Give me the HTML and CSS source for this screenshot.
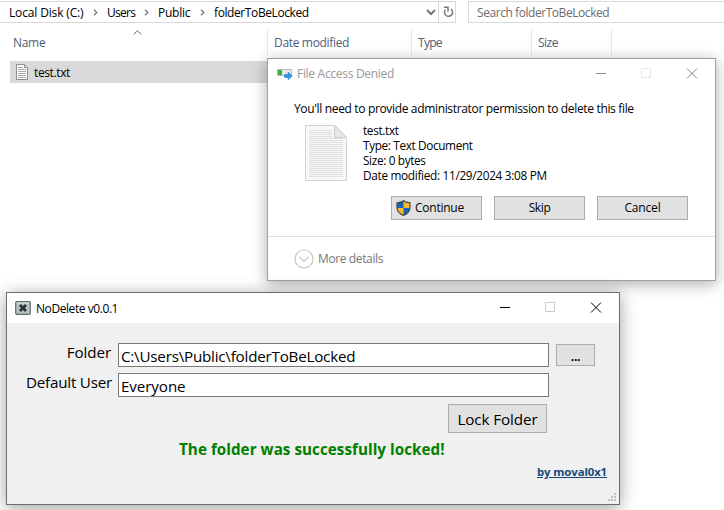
FILE: index.html
```html
<!DOCTYPE html>
<html lang="en">
<head>
<meta charset="utf-8">
<title>NoDelete</title>
<link rel="stylesheet" href="styles.css">
</head>
<body>
<main class="desktop">
  <section class="explorer">
    <div class="toolbar">
      <div class="address">
        <span class="crumb c1">Local Disk (C:)</span>
        <svg class="sep" width="5" height="7" viewBox="0 0 5 7"><path d="M1 .7 3.8 3.5 1 6.3"/></svg>
        <span class="crumb c2">Users</span>
        <svg class="sep" width="5" height="7" viewBox="0 0 5 7"><path d="M1 .7 3.8 3.5 1 6.3"/></svg>
        <span class="crumb c3">Public</span>
        <svg class="sep" width="5" height="7" viewBox="0 0 5 7"><path d="M1 .7 3.8 3.5 1 6.3"/></svg>
        <span class="crumb c4">folderToBeLocked</span>
        <svg class="drop" width="10" height="7" viewBox="0 0 10 7"><path d="M1 1 5 5 9 1"/></svg>
        <span class="refresh"><svg width="11" height="12" viewBox="0 0 11 12"><path d="M1 1.300H5V5.500M2.300 3.700A4.100 4.100 0 1 0 8 3"/></svg></span>
      </div>
      <div class="search"><span class="t-search">Search folderToBeLocked</span></div>
    </div>
    <div class="columns">
      <div class="col name"><span class="h-name">Name</span><svg class="sort" width="9" height="5" viewBox="0 0 9 5"><path d="M.7 4.3 4.5 .8 8.3 4.3"/></svg></div>
      <div class="col date"><span class="h-date">Date modified</span></div>
      <div class="col type"><span class="h-type">Type</span></div>
      <div class="col size"><span class="h-size">Size</span></div>
    </div>
    <div class="file">
      <svg width="12" height="16" viewBox="0 0 12 16"><path d="M.5.5H8.5L11.5 3.5V15.5H.5Z" fill="#fff" stroke="#8b8b8b"/><path d="M8.5.5V3.5H11.5" fill="#ddd" stroke="#8b8b8b"/><path d="M2 3.5H7M2 5.5H10M2 7.5H10M2 9.5H10M2 11.5H10M2 13.5H10" stroke="#aaa"/></svg>
      <span class="t-file">test.txt</span>
    </div>
  </section>

  <section class="window dialog">
    <header class="titlebar">
      <svg class="appicon" width="16" height="11" viewBox="0 0 16 11"><path d="M.5.5H14.5V6.5H.5Z" fill="#e8e8e8" stroke="#b9b9b9"/><path d="M1 1H5V6H1Z" fill="#2fb43a"/><path d="M7.5 5.5H11V3L15.3 7 11 10.8V8.5H7.5Z" fill="#2e95ea" stroke="#1979ca" stroke-width=".5"/></svg>
      <span class="t-title">File Access Denied</span>
      <svg class="ctl" width="102" height="11" viewBox="0 0 102 11"><path d="M0 5.5H10" stroke="#8c8c8c"/><path d="M45.500.5H54.500V9.500H45.500Z" stroke="#e6e6e6"/><path d="M91 .5 101 10.500M101 .5 91 10.500" stroke="#858585"/></svg>
    </header>
    <p class="message"><span class="t-message">You'll need to provide administrator permission to delete this file</span></p>
    <div class="details">
      <svg class="doc" width="42" height="56" viewBox="0 0 42 56"><path d="M.5.5H30L41.500 12.500V55.500H.5Z" fill="#f7f8f8" stroke="#d0d2d3"/><path d="M29.500.5V12.500H41.500Z" fill="#e6e7e8" stroke="#c9cbcc"/><path d="M4 5.500H27M4 7.500H27M4 9.500H27M4 11.500H27M4 13.500H38M4 15.500H38M4 17.500H38M4 19.500H38M4 21.500H38M4 23.500H38M4 25.500H38M4 27.500H38M4 29.500H38M4 31.500H38M4 33.500H38M4 35.500H38M4 37.500H38M4 39.500H38M4 41.500H38M4 43.500H38M4 45.500H38M4 47.500H38M4 49.500H38M4 51.500H38" stroke="#dddfe0"/></svg>
      <ul>
        <li><span class="d1">test.txt</span></li>
        <li><span class="d2">Type: Text Document</span></li>
        <li><span class="d3">Size: 0 bytes</span></li>
        <li><span class="d4">Date modified: 11/29/2024 3:08 PM</span></li>
      </ul>
    </div>
    <div class="actions">
      <button class="btn continue"><svg width="15" height="16" viewBox="0 0 15 16"><path d="M7.500.8C5.500 2.300 3 2.700 1 2.800V7.500C1 11.500 4 14 7.500 15.400 11 14 14 11.500 14 7.500V2.800C12 2.700 9.500 2.300 7.500.8Z" fill="#fbb82f"/><path d="M7.500.8C5.500 2.300 3 2.700 1 2.800V8H7.500ZM7.500 8H14C14 11.500 11 14 7.500 15.400Z" fill="#1464b9"/><path d="M7.500.8C5.500 2.300 3 2.700 1 2.800V7.500C1 11.500 4 14 7.500 15.400 11 14 14 11.500 14 7.500V2.800C12 2.700 9.500 2.300 7.500.8Z" fill="none" stroke="#4a4a48" stroke-width="1.200"/></svg><span class="b1">Continue</span></button>
      <button class="btn"><span class="b2">Skip</span></button>
      <button class="btn"><span class="b3">Cancel</span></button>
    </div>
    <footer class="more">
      <svg width="20" height="20" viewBox="0 0 20 20"><circle cx="10" cy="10" r="9"/><path d="M5.500 8 10 12.300 14.500 8"/></svg>
      <span class="t-more">More details</span>
    </footer>
  </section>

  <section class="window nodelete">
    <header class="titlebar">
      <svg class="appicon" width="16" height="14" viewBox="0 0 16 14"><rect x=".7" y=".7" width="14.600" height="12.600" rx="1" fill="#b9c1c1" stroke="#626b6d" stroke-width="1.200"/><path d="M2 2H14" stroke="#e0e5e5"/><path d="M5 4 11 10M11 4 5 10" stroke="#2b3335" stroke-width="2.800"/></svg>
      <span class="n-title">NoDelete v0.0.1</span>
      <svg class="ctl" width="102" height="11" viewBox="0 0 102 11"><path d="M0 5.500H10" stroke="#000"/><path d="M45.500.5H54.500V9.500H45.500Z" stroke="#ccc"/><path d="M91 .5 101 10.500M101 .5 91 10.500" stroke="#000"/></svg>
    </header>
    <div class="form">
      <div class="row"><label><span class="l1">Folder</span></label><div class="input"><span class="i1">C:\Users\Public\folderToBeLocked</span></div><button class="btn browse"><span class="b4">...</span></button></div>
      <div class="row"><label><span class="l2">Default User</span></label><div class="input"><span class="i2">Everyone</span></div></div>
      <button class="btn lock"><span class="b5">Lock Folder</span></button>
      <p class="status"><span class="t-status">The folder was successfully locked!</span></p>
      <a class="author"><span class="t-author">by moval0x1</span></a>
      <svg class="grip" width="8" height="8" viewBox="0 0 8 8"><path d="M6 0h2v2H6zM3 3h2v2H3zM6 3h2v2H6zM0 6h2v2H0zM3 6h2v2H3zM6 6h2v2H6z"/></svg>
    </div>
  </section>
</main>
</body>
</html>
```
FILE: styles.css
```css
* { box-sizing: border-box; margin: 0; padding: 0; }
body { font: 12px/15px "Open Sans", "Noto Sans", sans-serif; color: #000; background: #fff; overflow: hidden; }
span { white-space: nowrap; }
svg { fill: none; flex: none; display: block; }
.desktop { position: relative; width: 724px; height: 510px; overflow: hidden; }

.toolbar { display: flex; gap: 12px; padding-top: 1px; }
.address { display: flex; align-items: center; width: 456px; height: 22px; border: 1px solid #d9d9d9; border-left: 0; padding-left: 9px; }
.crumb { flex: none; }
.c1 { width: 84px; letter-spacing: -.15px; }
.c2 { width: 37px; letter-spacing: -.7px; }
.c3 { width: 42px; letter-spacing: -.25px; }
.c4 { width: 212px; letter-spacing: -.4px; }
.sep { stroke: #777; stroke-width: 1.3; margin-right: 9px; }
.drop { stroke: #777; stroke-width: 2; margin-right: 2px; }
.refresh { display: flex; align-items: center; justify-content: center; flex: 1; height: 20px; border-left: 1px solid #d9d9d9; padding-left: 2px; }
.refresh svg { stroke: #777; stroke-width: 1.5; }
.search { display: flex; align-items: center; flex: 1; height: 22px; border: 1px solid #d9d9d9; border-right: 0; padding-left: 8px; color: #6d6d6d; }
.t-search { letter-spacing: -.44px; }
.columns { display: flex; height: 25px; margin-top: 7px; color: #4c607a; }
.col { display: flex; align-items: center; border-right: 1px solid #e5e5e5; padding-left: 6px; }
.name { width: 268px; padding-left: 13px; }
.h-name { width: 120px; letter-spacing: -.3px; }
.h-date { letter-spacing: -.33px; }
.h-type { letter-spacing: -.7px; }
.h-size { letter-spacing: -.5px; }
.sort { stroke: #666; align-self: flex-start; }
.date { width: 144px; }
.type { width: 120px; }
.size { width: 80px; }
.file { display: flex; align-items: center; gap: 6px; width: 258px; height: 22px; margin: 6px 0 0 10px; padding-left: 6px; background: #d9d9d9; }
.t-file { letter-spacing: -.38px; }

.window { position: absolute; display: flex; flex-direction: column; background: #fff; }
.titlebar { display: flex; align-items: center; height: 30px; flex: none; }
.ctl { margin-left: auto; }
.btn { display: flex; align-items: center; justify-content: center; width: 91px; height: 24px; border: 1px solid #adadad; background: #e1e1e1; font: inherit; color: #000; }

.dialog { left: 267px; top: 58px; width: 449px; height: 223px; border: 1px solid #a0a0a0; box-shadow: 0 3px 14px rgba(0,0,0,.33); }
.dialog .titlebar { padding: 0 17px 0 9px; gap: 4px; color: #999; }
.dialog .ctl { margin-top: -2px; }
.t-title { letter-spacing: -.3px; margin-top: -1px; }
.message { margin: 12px 0 0 26px; height: 15px; }
.t-message { letter-spacing: -.34px; }
.details { display: flex; gap: 16px; margin: 7px 0 0 37px; height: 61px; }
.doc { margin-top: 2px; }
.details ul { list-style: none; }
.details li { height: 15px; font-size: 11.8px; }
.d1 { letter-spacing: -.33px; }
.d2 { letter-spacing: -.36px; }
.d3 { letter-spacing: -.35px; }
.d4 { letter-spacing: -.31px; }
.actions { display: flex; justify-content: flex-end; gap: 12px; padding-right: 27px; margin-top: 13px; }
.actions span { margin-top: -2px; }
.continue { justify-content: flex-start; padding-left: 4px; gap: 4px; }
.b1 { letter-spacing: -.25px; }
.b2 { letter-spacing: -.4px; }
.b3 { letter-spacing: -.15px; }
.more { display: flex; align-items: center; gap: 4px; height: 45px; margin-top: 16px; padding-left: 26px; border-top: 1px solid #dfdfdf; color: #777; }
.more svg { stroke: #c5c5c5; stroke-width: 1.2; }
.t-more { letter-spacing: -.38px; }

.nodelete { left: 6px; top: 292px; width: 614px; height: 213px; border: 1px solid #6d6d6d; box-shadow: 0 3px 16px rgba(0,0,0,.38); }
.nodelete .titlebar { padding: 0 17px 0 8px; gap: 5px; }
.nodelete .ctl { margin-top: -2px; }
.nodelete .appicon { margin-top: -1px; }
.n-title { letter-spacing: -.43px; }
.form { display: flex; flex-direction: column; flex: 1; background: #f0f0f0; padding: 20px 7px 0 0; font-size: 15.2px; line-height: 22px; }
.row { display: flex; height: 24px; margin-bottom: 6px; }
.row label { display: flex; justify-content: flex-end; width: 105px; margin-right: 6px; margin-top: -2px; }
.l1 { letter-spacing: -.1px; margin-right: 1px; }
.l2 { letter-spacing: -.22px; }
.input { display: flex; align-items: center; width: 431px; height: 24px; border: 1px solid #7a7a7a; background: #fff; padding: 2px 0 0 2px; }
.i1 { letter-spacing: -.22px; }
.i2 { letter-spacing: -.1px; }
.browse { width: 39px; height: 22px; margin: 1px 0 0 7px; font-size: 12px; font-weight: 700; }
.b4 { letter-spacing: -.2px; margin-top: 3px; }
.lock { width: 99px; height: 29px; margin: 1px 0 0 441px; }
.b5 { letter-spacing: -.1px; margin-top: 1px; }
.status { margin: 5px 0 0 172px; height: 22px; color: #008000; font-weight: 700; }
.t-status { letter-spacing: .05px; }
.author { align-self: flex-end; margin: 4px 5px 0 0; font-size: 11.4px; line-height: 15px; font-weight: 700; color: #17497c; text-decoration: underline; }
.t-author { letter-spacing: -.12px; }
.grip { fill: #bfbfbf; align-self: flex-end; margin: 14px -4px 0 0; }
```
